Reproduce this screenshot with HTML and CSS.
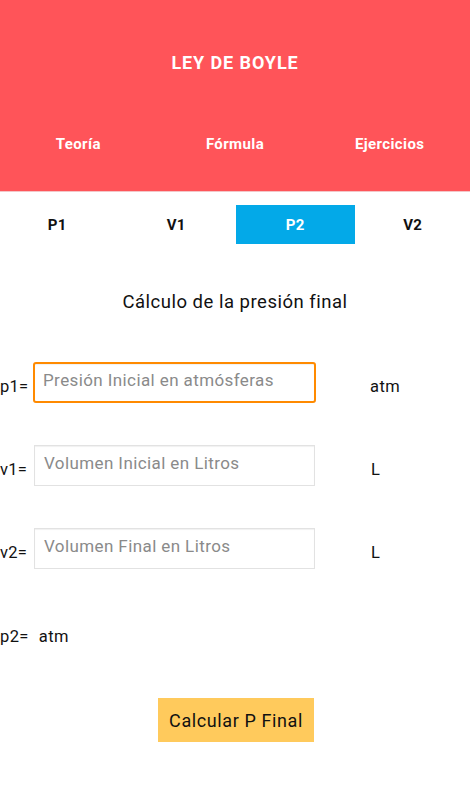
FILE: index.html
```html
<!DOCTYPE html>
<html lang="es">
<head>
<meta charset="utf-8">
<link rel="stylesheet" href="styles.css">
</head>
<body>
<header class="header">
  <h1 class="title">LEY DE BOYLE</h1>
  <nav class="tabs">
    <div class="tab">Teoría</div>
    <div class="tab">Fórmula</div>
    <div class="tab">Ejercicios</div>
  </nav>
</header>
<div class="subtabs">
  <div class="subtab">P1</div>
  <div class="subtab">V1</div>
  <div class="subtab active">P2</div>
  <div class="subtab">V2</div>
</div>
<h2 class="heading">Cálculo de la presión final</h2>
<div class="form">
  <div class="row">
    <span class="label">p1=</span>
    <div class="input focused">Presión Inicial en atmósferas</div>
    <span class="unit">atm</span>
  </div>
  <div class="row">
    <span class="label">v1=</span>
    <div class="input">Volumen Inicial en Litros</div>
    <span class="unit">L</span>
  </div>
  <div class="row">
    <span class="label">v2=</span>
    <div class="input">Volumen Final en Litros</div>
    <span class="unit">L</span>
  </div>
</div>
<div class="result"><span>p2=</span><span>atm</span></div>
<div class="actions"><button class="btn">Calcular P Final</button></div>
</body>
</html>
```
FILE: styles.css
```css
html, body {
  margin: 0;
  padding: 0;
  background: #ffffff;
  font-family: Roboto, "Noto Sans", sans-serif;
  color: #111;
}
.header {
  background: #ff5459;
  height: 192px;
  box-sizing: border-box;
  border-bottom: 1px solid #f3c6c8;
  color: #fff;
}
.title {
  margin: 0;
  padding-top: 52px;
  height: 22px;
  line-height: 22px;
  font-size: 18px;
  font-weight: 700;
  letter-spacing: 0.9px;
  text-align: center;
}
.tabs {
  display: grid;
  grid-template-columns: 1fr 1fr 1fr;
  margin-top: 59px;
}
.tab {
  text-align: center;
  font-size: 15px;
  font-weight: 700;
  letter-spacing: 0.4px;
  line-height: 22px;
}
.tab:last-child { padding-right: 4px; }
.subtabs {
  display: grid;
  grid-template-columns: repeat(4, 1fr);
  margin-top: 13px;
  height: 39px;
}
.subtab {
  display: flex;
  align-items: center;
  justify-content: center;
  font-size: 15px;
  font-weight: 700;
  letter-spacing: 0.4px;
  color: #111;
}
.subtab:first-child { padding-right: 3px; }
.subtab:last-child { padding-left: 3px; }
.subtab.active {
  background: #03a9e8;
  color: #fff;
  margin-left: 1px;
  margin-right: -2px;
}
.heading {
  margin: 46px 0 0;
  text-align: center;
  font-size: 18.5px;
  font-weight: 400;
  letter-spacing: 0.5px;
  line-height: 24px;
  color: #111;
}
.form {
  display: flex;
  flex-direction: column;
  gap: 42px;
  margin-top: 48px;
}
.row {
  display: flex;
  align-items: center;
  height: 41px;
}
.label {
  width: 33px;
  font-size: 16.5px;
  margin-top: 7px;
  letter-spacing: 0.2px;
}
.input {
  box-sizing: border-box;
  width: 281px;
  height: 41px;
  border: 1px solid #e2e2e2;
  box-shadow: inset 0 1px 1px rgba(0,0,0,0.06);
  padding: 6px 9px;
  font-size: 17px;
  letter-spacing: 0.4px;
  color: #8a8a8a;
  line-height: 22px;
  margin-left: 1px;
}
.input.focused {
  border: 2px solid #ff8a00;
  border-radius: 3px;
  padding: 5px 8px;
  width: 283px;
  margin-left: 0;
}
.unit {
  margin-left: 56px;
  font-size: 16.5px;
  letter-spacing: 0.5px;
  margin-top: 7px;
}
.row:first-child .unit { margin-left: 54px; }
.result {
  margin-top: 58px;
  font-size: 16.5px;
  letter-spacing: 0.4px;
  display: flex;
  gap: 10px;
  line-height: 20px;
}
.actions {
  display: flex;
  justify-content: center;
  margin-top: 51px;
}
.btn {
  width: 156px;
  height: 44px;
  border: none;
  background: #ffca5c;
  font-family: Roboto, "Noto Sans", sans-serif;
  font-size: 18px;
  letter-spacing: 0.6px;
  color: #111;
  padding: 0;
  margin-left: 2px;
}
```
